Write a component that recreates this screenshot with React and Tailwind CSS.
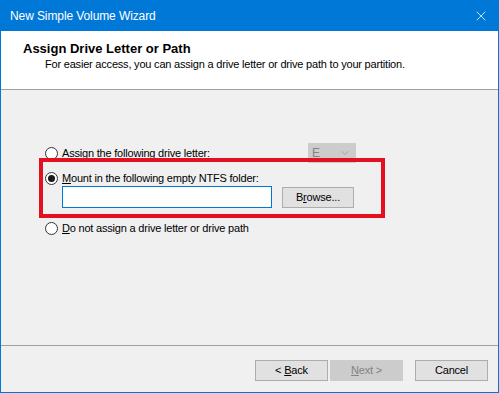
import { X, ChevronDown } from 'lucide-react'

function Radio({ checked }) {
  return (
    <span className="w-[13px] h-[13px] rounded-full border border-[#333] bg-white flex items-center justify-center shrink-0">
      {checked && <span className="w-[7px] h-[7px] rounded-full bg-[#1a1a1a]" />}
    </span>
  )
}

function Btn({ children, disabled, className = '' }) {
  return (
    <div
      className={`h-[21px] flex items-center justify-center border ${
        disabled ? 'border-[#cccccc] bg-[#cccccc] text-[#838383]' : 'border-[#adadad] bg-[#e1e1e1] text-black'
      } ${className}`}
    >
      <span>{children}</span>
    </div>
  )
}

export default function App() {
  return (
    <div className="w-[499px] h-[393px] flex flex-col bg-[#0078d7] px-px pb-px text-[11px] tracking-[-0.2px] text-black font-['Liberation_Sans',Arial,sans-serif] leading-none overflow-hidden">
      {/* title bar */}
      <div className="h-[31px] shrink-0 flex items-center justify-between pl-[9px] pr-[9px] text-white text-[12px] tracking-[-0.1px]">
        <span>New Simple Volume Wizard</span>
        <X size={16} strokeWidth={1.2} />
      </div>

      {/* header */}
      <div className="h-[59px] shrink-0 bg-white border-b border-[#a0a0a0] pl-[22px] pt-[11px]">
        <div className="font-bold text-[13px] tracking-normal">Assign Drive Letter or Path</div>
        <div className="pl-[22px] mt-[4px]">For easier access, you can assign a drive letter or drive path to your partition.</div>
      </div>

      {/* body */}
      <div className="flex-1 bg-[#f0f0f0] pl-[38px] flex flex-col">
        <div className="mt-[53px] h-[20px] flex items-center">
          <div className="w-[269px] flex items-center gap-[4px] pl-[6px]">
            <Radio />
            <span><u>A</u>ssign the following drive letter:</span>
          </div>
          <div className="w-[48px] h-[20px] bg-[#cccccc] border border-[#cccccc] flex items-center justify-between pl-[3px] pr-[4px] text-[#838383] text-[12px]">
            <span>E</span>
            <ChevronDown size={12} strokeWidth={1} />
          </div>
        </div>

        <div className="-mt-[5px] w-[346px] h-[60px] border-[4px] border-[#e3111f] flex flex-col">
          <div className="mt-[8px] h-[16px] flex items-center gap-[4px] pl-[2px]">
            <Radio checked />
            <span><u>M</u>ount in the following empty NTFS folder:</span>
          </div>
          <div className="flex items-center gap-[10px] pl-[19px]">
            <div className="w-[210px] h-[22px] bg-white border border-[#0078d7]" />
            <Btn className="w-[72px] h-[20px]">B<u>r</u>owse...</Btn>
          </div>
        </div>

        <div className="mt-[2px] h-[16px] flex items-center gap-[4px] pl-[6px]">
          <Radio />
          <span><u>D</u>o not assign a drive letter or drive path</span>
        </div>
      </div>

      {/* footer */}
      <div className="h-[47px] shrink-0 bg-[#f0f0f0] border-t border-[#a0a0a0] flex items-start justify-end pt-[14px] pr-[10px]">
        <Btn className="w-[73px]">&lt; <u>B</u>ack</Btn>
        <Btn disabled className="w-[73px] ml-[2px]"><u>N</u>ext &gt;</Btn>
        <Btn className="w-[73px] ml-[12px]">Cancel</Btn>
      </div>
    </div>
  )
}
